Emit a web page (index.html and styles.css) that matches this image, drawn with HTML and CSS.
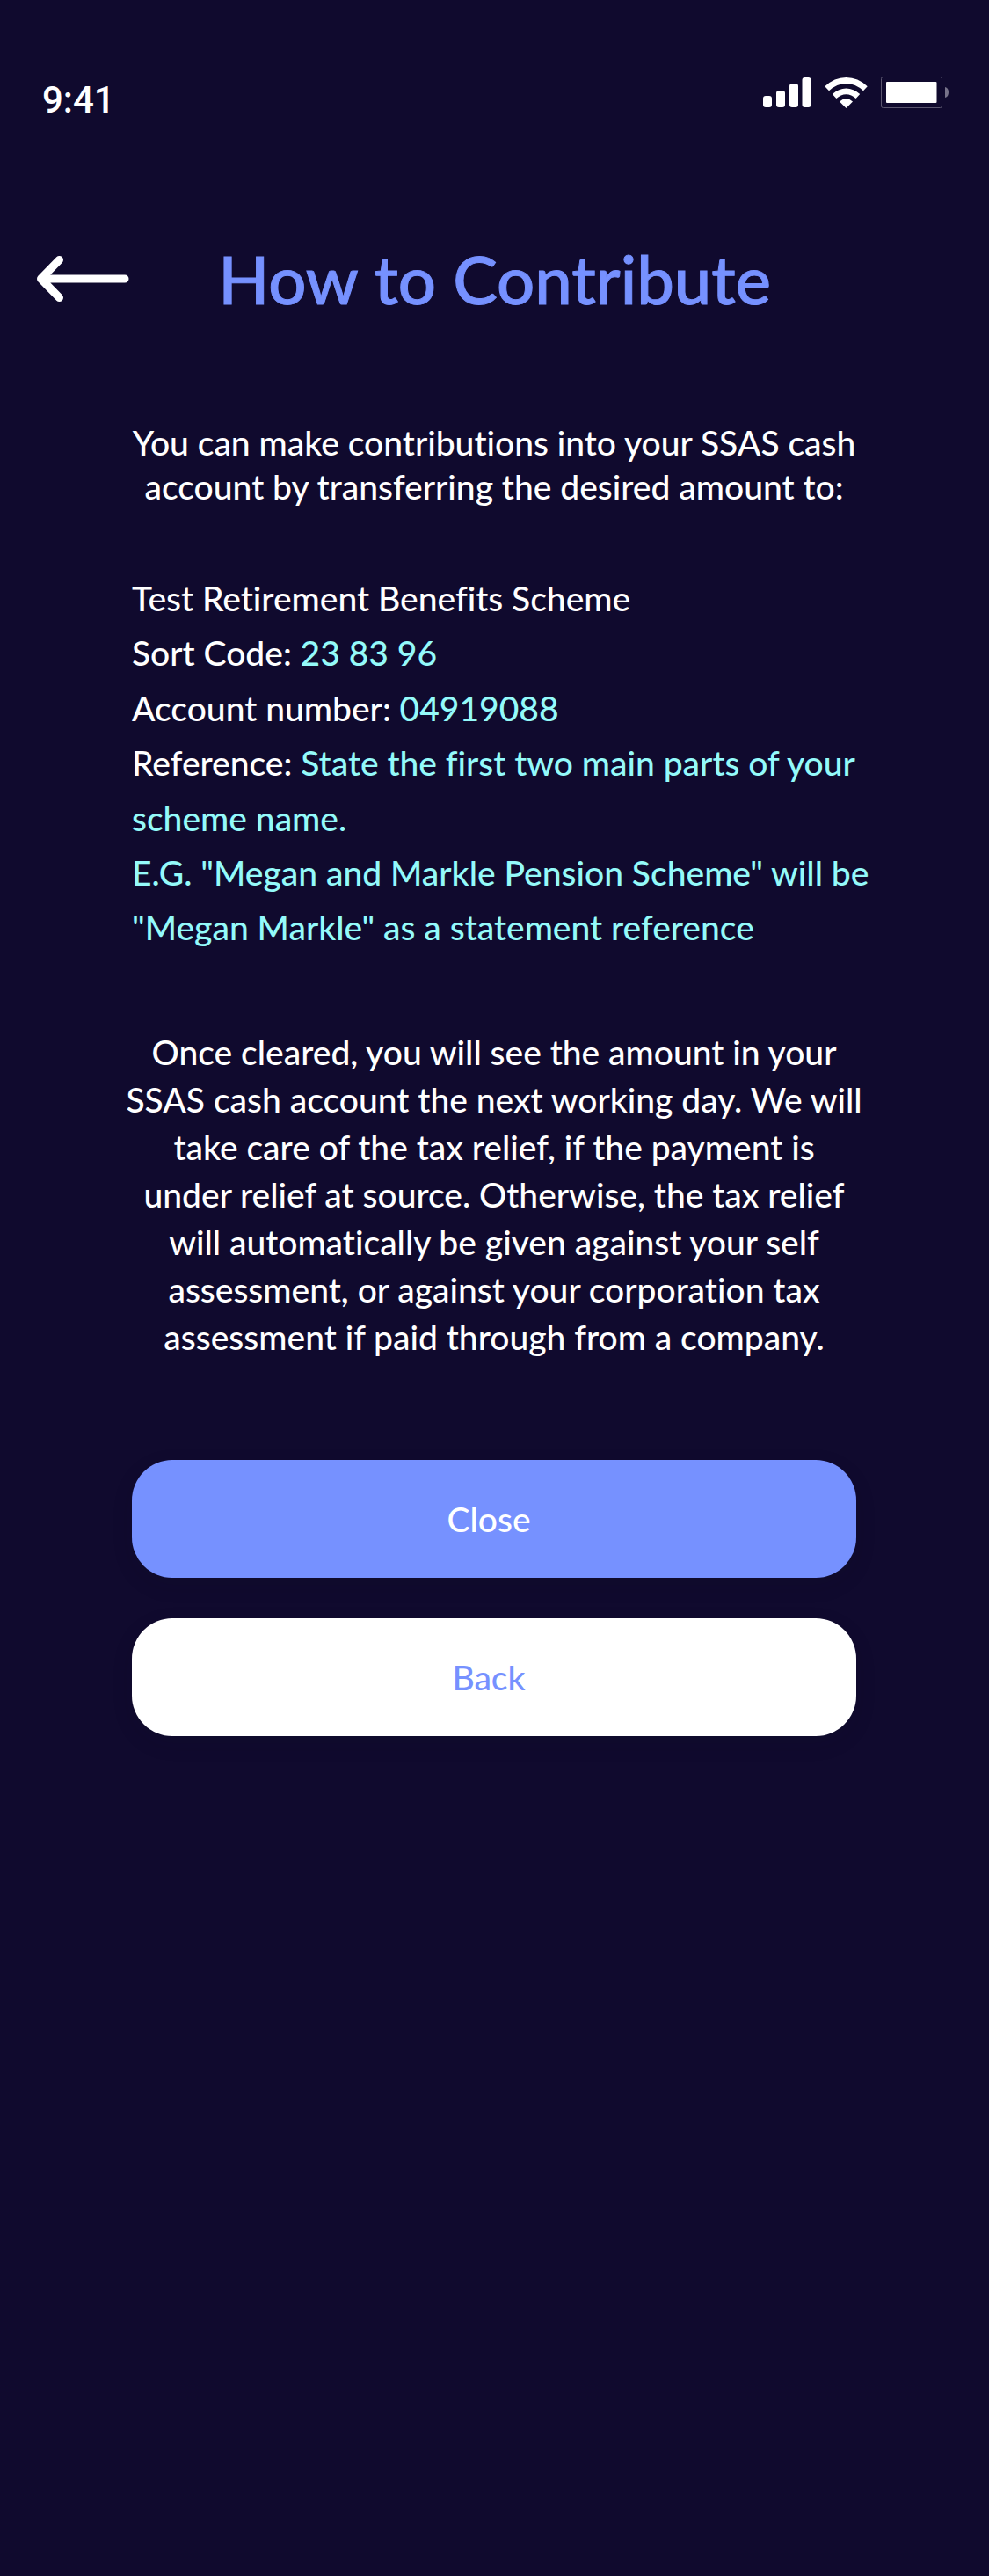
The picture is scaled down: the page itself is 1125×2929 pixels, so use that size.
FILE: index.html
```html
<!DOCTYPE html>
<html lang="en">
<head>
    <meta charset="UTF-8">
    <meta name="viewport" content="width=device-width, initial-scale=1">
    <title>How to Contribute</title>
    <link rel="stylesheet" href="styles.css">
</head>
<body>
    <div class="status-bar">
        <span class="time">9:41</span>
        <div class="status-icons">
            <svg class="signal" width="55" height="34" viewBox="0 0 55 34" fill="#fff">
                <rect x="0" y="21" width="10" height="13" rx="3"/>
                <rect x="15" y="15" width="10" height="19" rx="3"/>
                <rect x="30" y="7" width="10" height="27" rx="3"/>
                <rect x="44.5" y="0" width="10" height="34" rx="3"/>
            </svg>
            <svg class="wifi" width="49" height="35" viewBox="0 0 49 35" fill="#fff">
                <path d="M0.3 10.2Q11 0 24.5 0T48.7 10.2L44 15.2Q35 7 24.5 7T5 15.2Z"/>
                <path d="M8.8 19Q16 12.4 24.5 12.4T40.2 19L35.6 23.9Q30.5 19.2 24.5 19.2T13.4 23.9Z"/>
                <path d="M17 27.4Q20.5 24.3 24.5 24.3T32 27.4L24.5 35Z"/>
            </svg>
            <svg class="battery" width="78" height="36" viewBox="0 0 78 36">
                <rect x="0.5" y="0.5" width="69" height="35" rx="2" fill="none" stroke="#5b566f"/>
                <rect x="6" y="6" width="57.5" height="24" rx="1" fill="#fff"/>
                <path d="M73 12Q77 13 77 18T73 24Z" fill="#77738a"/>
            </svg>
        </div>
    </div>

    <header class="header">
        <a class="back-arrow" href="#" aria-label="Go back">
            <svg width="105" height="52" viewBox="0 0 105 52" fill="none" stroke="#fff" stroke-width="9" stroke-linecap="round" stroke-linejoin="round">
                <path d="M100 26H5M25.500 4.500L4.500 26L25.500 47.500"/>
            </svg>
        </a>
        <h1>How to Contribute</h1>
    </header>

    <main>
        <p class="intro">You can make contributions into your SSAS cash<br>account by transferring the desired amount to:</p>

        <p class="details">
            Test Retirement Benefits Scheme<br>
            Sort Code: <span>23 83 96</span><br>
            Account number: <span>04919088</span><br>
            Reference: <span>State the first two main parts of your<br>
            scheme name.<br>
            E.G. "Megan and Markle Pension Scheme" will be<br>
            "Megan Markle" as a statement reference</span>
        </p>

        <p class="note">
            Once cleared, you will see the amount in your<br>
            SSAS cash account the next working day. We will<br>
            take care of the tax relief, if the payment is<br>
            under relief at source. Otherwise, the tax relief<br>
            will automatically be given against your self<br>
            assessment, or against your corporation tax<br>
            assessment if paid through from a company.
        </p>

        <div class="actions">
            <button type="button" class="btn btn-close">Close</button>
            <button type="button" class="btn btn-back">Back</button>
        </div>
    </main>
</body>
</html>
```
FILE: styles.css
```css
*{
    margin: 0;
    padding: 0;
    box-sizing: border-box;
}
body{
    min-height: 100vh;
    background: #100a2e;
    color: #fff;
    font-family: Lato, "Open Sans", sans-serif;
    font-size: 39px;
    font-weight: 500;
    font-variant-ligatures: no-common-ligatures;
}
svg{
    display: block;
}

/* status bar */
.status-bar{
    display: flex;
    justify-content: space-between;
    align-items: flex-start;
    padding: 86px 45px 0 48px;
}
.time{
    font-family: Roboto, sans-serif;
    font-size: 42px;
    line-height: 56px;
}
.status-icons{
    display: flex;
    align-items: center;
    gap: 15px;
    padding-top: 1px;
}

/* title */
.header{
    display: grid;
    grid-template-columns: 105px 1fr 105px;
    align-items: center;
    padding: 0 42px;
    margin-top: 125px;
}
h1{
    font-size: 76px;
    font-weight: 500;
    line-height: 100px;
    text-align: center;
    white-space: nowrap;
    color: #7691ff;
    -webkit-text-stroke: 1px;
}

/* content */
main{
    padding: 0 151px 0 150px;
    margin-top: 111px;
}
p{
    white-space: nowrap;
}
.intro{
    line-height: 50px;
    text-align: center;
}
.details{
    margin-top: 71px;
    line-height: 1.6;
}
.details span{
    color: #94fafa;
}
.note{
    margin: 83px -12px 0;
    line-height: 54px;
    text-align: center;
}
.actions{
    display: flex;
    flex-direction: column;
    gap: 46px;
    margin-top: 113px;
}
.btn{
    height: 134px;
    padding-right: 12px;
    border: 0;
    border-radius: 46px;
    font: inherit;
    box-shadow: 0 8px 24px rgba(0, 16, 32, .1);
}
.btn-close{
    background: #7691ff;
    color: #fff;
}
.btn-back{
    background: #fff;
    color: #7691ff;
}
```
